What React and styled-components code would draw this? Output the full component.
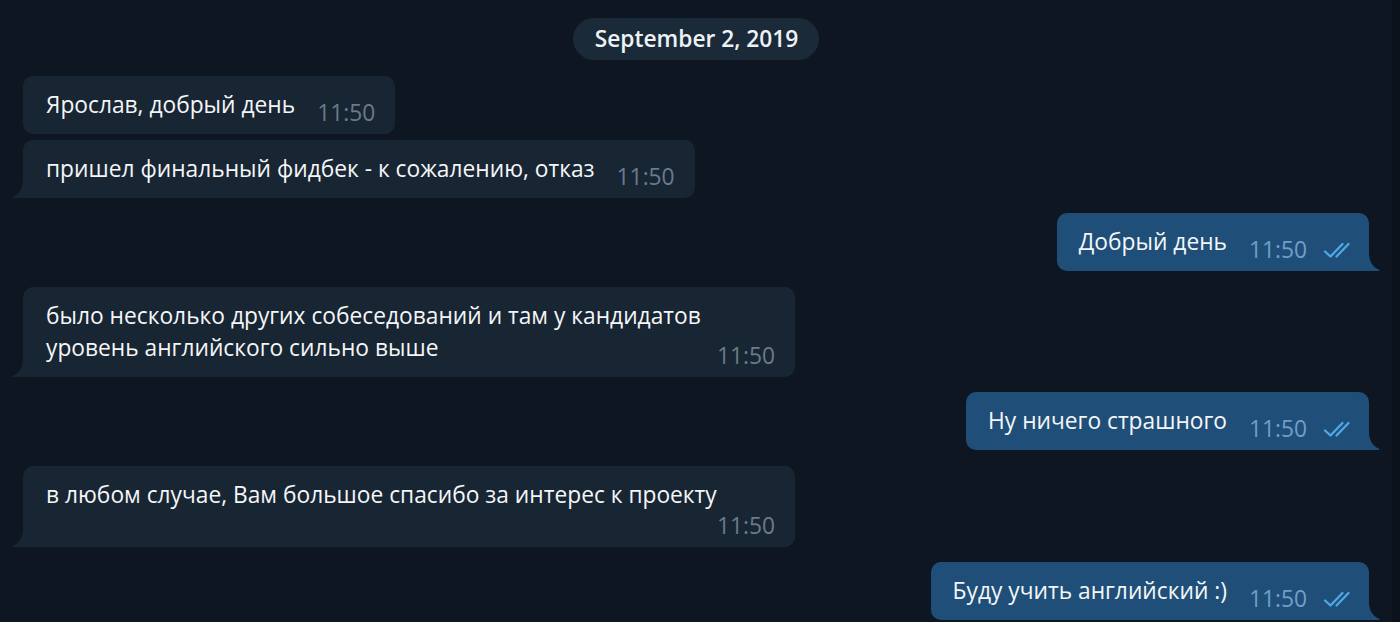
import React from "react";
import styled, { createGlobalStyle } from "styled-components";

const GlobalStyle = createGlobalStyle`
  html, body {
    margin: 0;
    padding: 0;
    background: #0e1621;
  }
  body {
    font-family: "Open Sans", "Noto Sans", sans-serif;
  }
`;

const Screen = styled.div`
  display: flex;
  width: 1400px;
  height: 622px;
  overflow: hidden;
  background: #0e1621;
`;

const Chat = styled.div`
  flex: 1;
  display: flex;
  flex-direction: column;
  padding: 18px 23px 0 23px;
`;

const ScrollTrack = styled.div`
  width: 8px;
  background: #0b121b;
`;

const DateRow = styled.div`
  display: flex;
  justify-content: center;
`;

const DatePill = styled.div`
  height: 42px;
  line-height: 42px;
  padding: 0 21px 0 22px;
  border-radius: 21px;
  background: #1b2a39;
  color: #eef2f6;
  font-size: 22.75px;
  font-weight: 600;
`;

const Row = styled.div`
  display: flex;
  justify-content: ${(p) => (p.$out ? "flex-end" : "flex-start")};
  margin-top: ${(p) => (p.$grouped ? "6px" : "15.5px")};
`;

const Bubble = styled.div`
  position: relative;
  max-width: 772px;
  box-sizing: border-box;
  padding: ${(p) => (p.$out ? "13px 14px 11px 22px" : "13px 20px 11px 23px")};
  border-radius: 10px;
  ${(p) =>
    p.$tail && (p.$out ? "border-bottom-right-radius: 0;" : "border-bottom-left-radius: 0;")}
  background: ${(p) => (p.$out ? "#1f4f79" : "#182533")};
  color: #f4f6f8;
  font-size: 22.75px;
  line-height: 32px;
  display: flow-root;
`;

const Tail = styled.svg`
  position: absolute;
  bottom: 0;
  width: 11px;
  height: 18px;
  ${(p) => (p.$out ? "right: -11px; transform: scaleX(-1);" : "left: -11px;")}
`;

const Meta = styled.span`
  float: right;
  display: flex;
  align-items: center;
  margin-left: 22px;
  margin-top: ${(p) => (p.$below ? "5px" : "14px")};
  line-height: 20px;
  font-size: 22.75px;
  color: ${(p) => (p.$out ? "#6f9fc9" : "#6a7b8b")};
`;

const Checks = styled.svg`
  width: 32px;
  height: 18px;
  margin-left: 16px;
`;

function DoubleCheck() {
  return (
    <Checks viewBox="0 0 32 18" fill="none">
      <path d="M2 10.5 L7.5 15.5 L19.5 3" stroke="#4fa8e6" strokeWidth="2.3" strokeLinecap="round" strokeLinejoin="round" />
      <path d="M13.5 15.5 L25.5 3" stroke="#4fa8e6" strokeWidth="2.3" strokeLinecap="round" />
    </Checks>
  );
}

function Message({ text, out, tail, grouped, below }) {
  const color = out ? "#1f4f79" : "#182533";
  return (
    <Row $out={out} $grouped={grouped}>
      <Bubble $out={out} $tail={tail}>
        {text}
        <Meta $out={out} $below={below}>
          11:50
          {out && <DoubleCheck />}
        </Meta>
        {tail && (
          <Tail $out={out} viewBox="0 0 11 18">
            <path d="M11 0 C11 8 7.5 14 1.2 16.6 Q0 17.3 0.8 18 L11 18 Z" fill={color} />
          </Tail>
        )}
      </Bubble>
    </Row>
  );
}

const messages = [
  { text: "Ярослав, добрый день", out: false, tail: false, grouped: false },
  { text: "пришел финальный фидбек - к сожалению, отказ", out: false, tail: true, grouped: true },
  { text: "Добрый день", out: true, tail: true, grouped: false },
  {
    text: "было несколько других собеседований и там у кандидатов уровень английского сильно выше",
    out: false,
    tail: true,
    grouped: false,
  },
  { text: "Ну ничего страшного", out: true, tail: true, grouped: false },
  {
    text: "в любом случае, Вам большое спасибо за интерес к проекту",
    out: false,
    tail: true,
    grouped: false,
    below: true,
  },
  { text: "Буду учить английский :)", out: true, tail: true, grouped: false },
];

export default function App() {
  return (
    <>
      <GlobalStyle />
      <Screen>
        <Chat>
          <DateRow>
            <DatePill>September 2, 2019</DatePill>
          </DateRow>
          {messages.map((m, i) => (
            <Message key={i} {...m} />
          ))}
        </Chat>
        <ScrollTrack />
      </Screen>
    </>
  );
}
